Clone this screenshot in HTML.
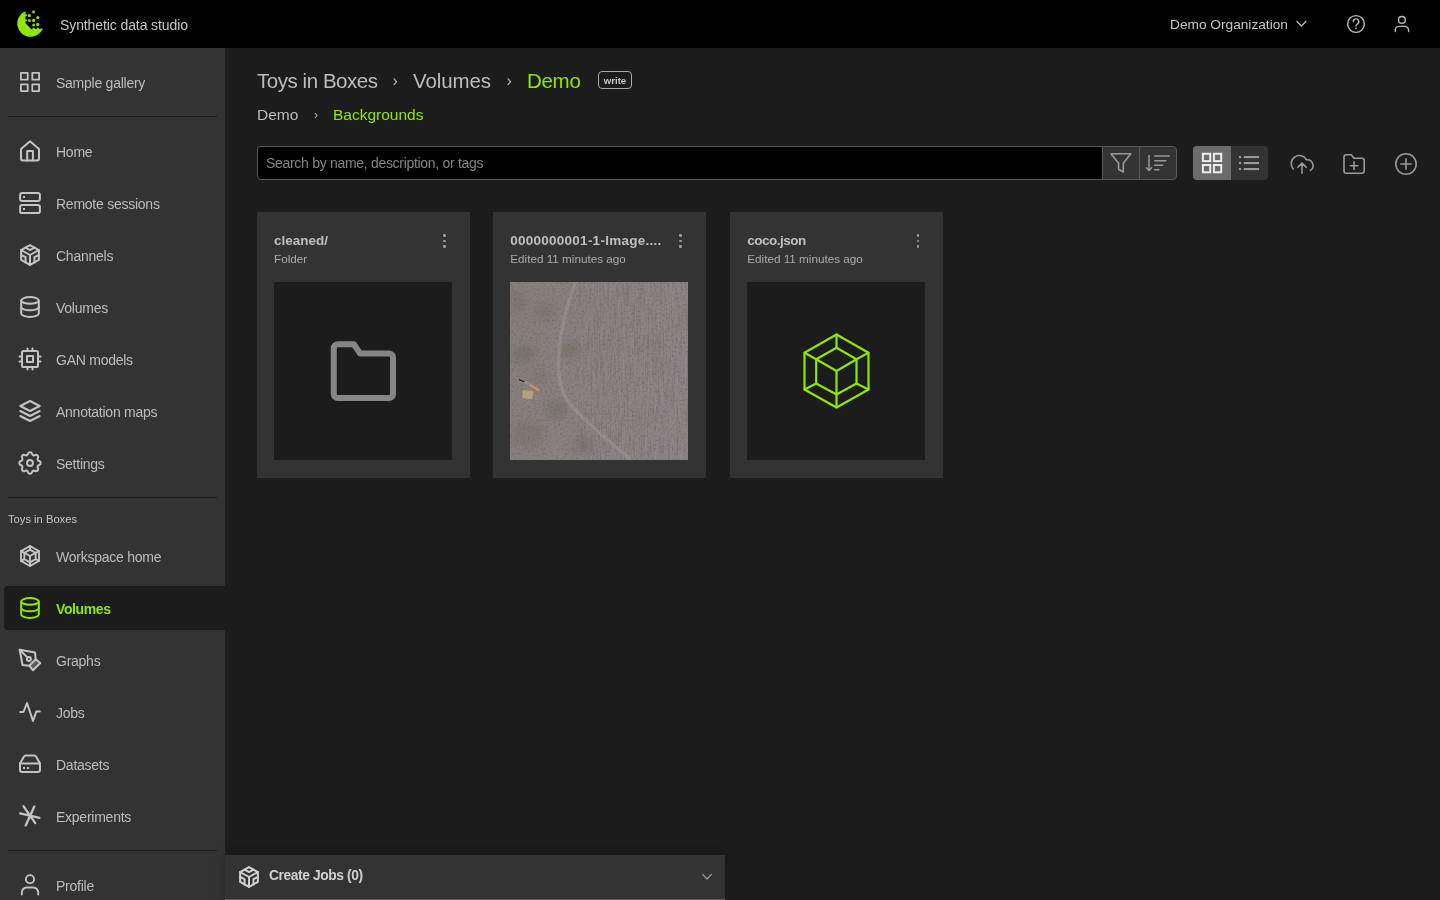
<!DOCTYPE html>
<html>
<head>
<meta charset="utf-8">
<style>
*{box-sizing:border-box;margin:0;padding:0}
html,body{width:1440px;height:900px;overflow:hidden;background:#1c1c1c;font-family:"Liberation Sans",sans-serif;color:#c8c8c8}
.abs{position:absolute;white-space:nowrap}
#main{position:absolute;left:0;top:0;width:1440px;height:900px;will-change:transform}
#hdr{will-change:transform;position:absolute;left:0;top:0;width:1440px;height:48px;background:#000}
#side{will-change:transform;position:absolute;left:0;top:48px;width:225px;height:852px;background:#333}
.item{position:absolute;left:4px;width:221px;height:44px}
.item svg{position:absolute;left:14px;top:10px;width:24px;height:24px;overflow:visible}
.item span{position:absolute;left:52px;top:1px;line-height:44px;font-size:14px;color:#bdbdbd;letter-spacing:-0.25px}
.item.active{background:#1c1c1c;border-radius:4px 0 0 4px}
.item.active span{color:#91e600;font-weight:700;letter-spacing:-0.4px}
.div{position:absolute;left:8px;width:209px;height:1px;background:#1c1c1c}
.ico{fill:none;stroke:#c4c4c4;stroke-width:2;stroke-linecap:round;stroke-linejoin:round}
.card{position:absolute;top:212px;width:213px;height:266px;background:#333}
.card .t{position:absolute;left:17px;top:19.5px;line-height:18px;font-size:13.5px;font-weight:700;color:#bfbfbf}
.card .s{position:absolute;left:17px;top:39px;line-height:16px;font-size:11.7px;color:#ababab}
.card .img{position:absolute;left:17px;top:70px;width:178px;height:178px;background:#1c1c1c;overflow:hidden}
.kebab{position:absolute;top:22px;width:4px;height:16px}
.kebab i{position:absolute;left:0.2px;width:2.6px;height:2.6px;border-radius:50%;background:#9c9c9c}
</style>
</head>
<body>
<div id="hdr">
  <svg class="abs" style="left:14px;top:8px" width="32" height="32" viewBox="14 8 32 32">
    <defs><clipPath id="lc"><path d="M14 8 H25.4 V23 L31.4 29.3 H46 V8 Z M14 8 V40 H46 V8" clip-rule="evenodd"/></clipPath></defs>
    <path fill="#91e600" d="M25.6 11.2 L25.4 23 L31.4 29.2 L42.9 28.6 A13.3 13.3 0 1 1 25.6 11.2 Z"/>
    <g fill="#91e600">
      <circle cx="33.6" cy="11.9" r="1.55" fill="#84d000"/><circle cx="29.4" cy="15.5" r="1.55"/><circle cx="37.8" cy="17.5" r="1.55"/>
      <circle cx="29.4" cy="20.4" r="1.5" fill="#80cc00"/><circle cx="33.6" cy="20.4" r="1.55"/><circle cx="33.6" cy="25" r="1.5" fill="#80cc00"/><circle cx="37.8" cy="24.4" r="1.55"/><circle cx="25.9" cy="15.3" r="1.1"/><circle cx="25.9" cy="20.3" r="1.1"/><circle cx="33.6" cy="28.7" r="1.1"/><circle cx="37.8" cy="28.6" r="1.1"/>
    </g>
  </svg>
  <div class="abs" style="left:60px;top:15px;line-height:20px;font-size:14px;letter-spacing:-0.1px;color:#c6c6c6">Synthetic data studio</div>
  <div class="abs" style="left:1170px;top:15px;line-height:20px;font-size:13.7px;color:#c6c6c6">Demo Organization</div>
  <svg class="abs" style="left:1290px;top:16px" width="20" height="16" viewBox="1290 16 20 16"><path d="M1297 21.5 L1301.4 26 L1305.8 21.5" fill="none" stroke="#bbb" stroke-width="1.3" stroke-linecap="round" stroke-linejoin="round"/></svg>
  <svg class="abs" style="left:1340px;top:8px" width="32" height="32" viewBox="1340 8 32 32">
    <circle cx="1356" cy="24" r="8.4" fill="none" stroke="#b8b8b8" stroke-width="1.4"/>
    <path d="M1353.4 21.6 A2.7 2.7 0 1 1 1357.3 24 Q1356 24.8 1356 26.1" fill="none" stroke="#b8b8b8" stroke-width="1.4" stroke-linecap="round"/>
    <circle cx="1356" cy="28.3" r="0.9" fill="#b8b8b8"/>
  </svg>
  <svg class="abs" style="left:1386px;top:8px" width="32" height="32" viewBox="1386 8 32 32">
    <circle cx="1401.9" cy="19.9" r="3.4" fill="none" stroke="#b8b8b8" stroke-width="1.4"/>
    <path d="M1395.3 31.5 V30 A3.6 3.6 0 0 1 1398.9 26.4 H1405 A3.6 3.6 0 0 1 1408.6 30 V31.5" fill="none" stroke="#b8b8b8" stroke-width="1.4" stroke-linecap="round"/>
  </svg>
</div>

<div id="side">
<div class="item" style="top:12px"><svg viewBox="0 0 24 24"><g class="ico" style="stroke-width:1.8"><rect x="2.9" y="2.9" width="6.8" height="6.8"/><rect x="14.3" y="2.9" width="6.8" height="6.8"/><rect x="2.9" y="14.3" width="6.8" height="6.8"/><rect x="14.3" y="14.3" width="6.8" height="6.8"/></g></svg><span>Sample gallery</span></div>
<div class="div" style="top:68px"></div>
<div class="item" style="top:81px"><svg viewBox="0 0 24 24"><g class="ico"><path d="M3 10 L12 2.2 L21 10 V19.5 A2 2 0 0 1 19 21.5 H5 A2 2 0 0 1 3 19.5 Z"/><path d="M9.2 21.5 V12 H14.9 V21.5"/></g></svg><span>Home</span></div>
<div class="item" style="top:133px"><svg viewBox="0 0 24 24"><g class="ico"><rect x="2.1" y="1.9" width="19.8" height="8.1" rx="2.2"/><rect x="2.1" y="13.9" width="19.8" height="8.2" rx="2.2"/></g><rect x="5" y="5" width="2" height="2" fill="#c4c4c4"/><rect x="5" y="17" width="2" height="2" fill="#c4c4c4"/></svg><span>Remote sessions</span></div>
<div class="item" style="top:185px"><svg viewBox="0 0 24 24"><g class="ico" transform="translate(12 12) scale(1.11) translate(-12 -12)" style="stroke-width:1.8"><path d="M20 7.5v9l-4 2.25l-4 2.25l-4 -2.25l-4 -2.25v-9l4 -2.25l4 -2.25l4 2.25z"/><path d="M12 12l4 -2.25l4 -2.25"/><path d="M12 12l0 9"/><path d="M12 12l-4 -2.25l-4 -2.25"/><path d="M20 12l-4 2v4.75"/><path d="M4 12l4 2l0 4.75"/><path d="M8 5.25l4 2.25l4 -2.25"/></g></svg><span>Channels</span></div>
<div class="item" style="top:237px"><svg viewBox="0 0 24 24"><g class="ico" transform="translate(12 12) scale(1.1) translate(-12 -12)" style="stroke-width:1.8"><ellipse cx="12" cy="6" rx="8" ry="3"/><path d="M4 6v6a8 3 0 0 0 16 0v-6"/><path d="M4 12v6a8 3 0 0 0 16 0v-6"/></g></svg><span>Volumes</span></div>
<div class="item" style="top:289px"><svg viewBox="0 0 24 24"><g class="ico"><path d="M4 5.6 A1.6 1.6 0 0 1 5.6 4 H18.4 A1.6 1.6 0 0 1 20 5.6 V18.4 A1.6 1.6 0 0 1 18.4 20 H5.6 A1.6 1.6 0 0 1 4 18.4 Z"/><path d="M9 9h6v6h-6z"/><path d="M1.5 9.5h2.5 M1.5 14.5h2.5 M20 9.5h2.5 M20 14.5h2.5 M9.5 1.5v2.5 M14.5 1.5v2.5 M9.5 20v2.5 M14.5 20v2.5"/></g></svg><span>GAN models</span></div>
<div class="item" style="top:341px"><svg viewBox="0 0 24 24"><g class="ico"><path d="M12 2 L21.7 7 L12 12 L2.3 7 Z"/><path d="M2.3 12 L12 17 L21.7 12"/><path d="M2.3 17 L12 22 L21.7 17"/></g></svg><span>Annotation maps</span></div>
<div class="item" style="top:393px"><svg viewBox="0 0 24 24"><g class="ico" transform="translate(12 12) scale(1.19) translate(-12 -12)" style="stroke-width:1.7"><path d="M10.325 4.317c.426 -1.756 2.924 -1.756 3.35 0a1.724 1.724 0 0 0 2.573 1.066c1.543 -.94 3.31 .826 2.37 2.37a1.724 1.724 0 0 0 1.065 2.572c1.756 .426 1.756 2.924 0 3.35a1.724 1.724 0 0 0 -1.066 2.573c.94 1.543 -.826 3.31 -2.37 2.37a1.724 1.724 0 0 0 -2.572 1.065c-.426 1.756 -2.924 1.756 -3.35 0a1.724 1.724 0 0 0 -2.573 -1.066c-1.543 .94 -3.31 -.826 -2.37 -2.37a1.724 1.724 0 0 0 -1.065 -2.572c-1.756 -.426 -1.756 -2.924 0 -3.35a1.724 1.724 0 0 0 1.066 -2.573c-.94 -1.543 .826 -3.31 2.37 -2.37c1 .608 2.296 .07 2.572 -1.065z"/></g><circle class="ico" cx="12" cy="12" r="2.9"/></svg><span>Settings</span></div>
<div class="div" style="top:449px"></div>
<div class="abs" style="left:8px;top:463px;line-height:16px;font-size:11.2px;color:#c4c4c4">Toys in Boxes</div>
<div class="item" style="top:486px"><svg viewBox="0 0 24 24"><g class="ico" style="stroke-width:1.9"><path d="M12 2 L21 7.1 V16.9 L12 22 L3 16.9 V7.1 Z"/><path d="M12 5.7 L17.65 8.9 V15.1 L12 18.3 L6.35 15.1 V8.9 Z"/><path d="M12 12 L6.35 8.9 M12 12 L17.65 8.9 M12 12 V18.3 M12 2 V5.7 M21 7.1 L17.65 8.9 M21 16.9 L17.65 15.1 M12 22 V18.3 M3 16.9 L6.35 15.1 M3 7.1 L6.35 8.9"/></g></svg><span>Workspace home</span></div>
<div class="item active" style="top:538px"><svg viewBox="0 0 24 24"><g class="ico" transform="translate(12 12) scale(1.1) translate(-12 -12)" style="stroke-width:1.8;stroke:#91e600"><ellipse cx="12" cy="6" rx="8" ry="3"/><path d="M4 6v6a8 3 0 0 0 16 0v-6"/><path d="M4 12v6a8 3 0 0 0 16 0v-6"/></g></svg><span>Volumes</span></div>
<div class="item" style="top:590px"><svg viewBox="0 0 24 24"><g class="ico"><path d="M1.7 1.7 L17 4.5 L17.7 11.3 L11.3 17.7 L4.5 17 Z"/><path d="M1.7 1.7 L9.4 9.4"/><circle cx="10.9" cy="10.9" r="2"/><path d="M17.7 11.3 L22.3 15 L15 22.3 L11.3 17.7" fill="rgba(196,196,196,0.3)"/></g></svg><span>Graphs</span></div>
<div class="item" style="top:642px"><svg viewBox="0 0 24 24"><g class="ico"><path d="M2.2 12 H5.5 L9 3 L15 21 L18.3 11.6 H21.8"/></g></svg><span>Jobs</span></div>
<div class="item" style="top:694px"><svg viewBox="0 0 24 24"><g class="ico"><path d="M2 11.5 H22 V18 A2 2 0 0 1 20 20 H4 A2 2 0 0 1 2 18 Z"/><path d="M2 11.5 L6 4.6 A2 2 0 0 1 7.7 3.6 H16.3 A2 2 0 0 1 18 4.6 L22 11.5"/></g><rect x="5" y="15" width="2" height="2" fill="#c4c4c4"/><rect x="9" y="15" width="2" height="2" fill="#c4c4c4"/></svg><span>Datasets</span></div>
<div class="item" style="top:746px"><svg viewBox="0 0 24 24"><g class="ico" style="stroke-width:2.3"><path d="M5.6 2.3 L17.3 19.1 M16.3 2.5 L7.7 21.4 M2.2 9.3 L21.4 13.8"/></g></svg><span>Experiments</span></div>
<div class="div" style="top:802px"></div>
<div class="item" style="top:815px"><svg viewBox="0 0 24 24"><g class="ico" style="stroke-width:1.9"><circle cx="12" cy="6.2" r="4.1"/><path d="M3.8 21.5 V19.5 A5 5 0 0 1 8.8 14.5 H15.2 A5 5 0 0 1 20.2 19.5 V21.5"/></g></svg><span>Profile</span></div>

</div>

<div id="main">
<div class="abs" style="left:257px;top:66.7px;line-height:28px;font-size:20.5px;letter-spacing:-0.45px;color:#bdbdbd">Toys in Boxes</div>
<div class="abs" style="left:392.5px;top:69px;line-height:24px;font-size:16px;color:#b8b8b8">›</div>
<div class="abs" style="left:413px;top:66.7px;line-height:28px;font-size:20.5px;letter-spacing:-0.1px;color:#bdbdbd">Volumes</div>
<div class="abs" style="left:506.5px;top:69px;line-height:24px;font-size:16px;color:#b8b8b8">›</div>
<div class="abs" style="left:527px;top:66.7px;line-height:28px;font-size:20.5px;letter-spacing:-0.3px;color:#91e600">Demo</div>
<div class="abs" style="left:598px;top:71px;width:34px;height:18px;border:1.5px solid #a8a8a8;border-radius:4px;font-size:9.6px;font-weight:700;line-height:17px;text-align:center;color:#c4c4c4">write</div>
<div class="abs" style="left:257px;top:104px;line-height:22px;font-size:15.5px;color:#bdbdbd">Demo</div>
<div class="abs" style="left:314px;top:105px;line-height:20px;font-size:12px;color:#b8b8b8">›</div>
<div class="abs" style="left:333px;top:104px;line-height:22px;font-size:15.5px;color:#91e600">Backgrounds</div>

<!-- search group -->
<div class="abs" style="left:257px;top:146px;width:920px;height:34px;border:1px solid #585858;border-radius:4px;background:#333;overflow:hidden">
  <div class="abs" style="left:0;top:0;width:844px;height:32px;background:#000"></div>
  <div class="abs" style="left:844px;top:0;width:1px;height:32px;background:#585858"></div>
  <div class="abs" style="left:881px;top:0;width:1px;height:32px;background:#585858"></div>
</div>
<div class="abs" style="left:266px;top:153.2px;line-height:20px;font-size:14px;letter-spacing:-0.3px;color:#848484">Search by name, description, or tags</div>
<svg class="abs" style="left:1104px;top:146px" width="34" height="34" viewBox="1104 146 34 34"><path d="M1111 153.8 H1130.8 L1123.3 163.2 V172 L1118.6 169.3 V163.2 Z" fill="none" stroke="#999" stroke-width="1.6" stroke-linejoin="round"/></svg>
<svg class="abs" style="left:1140px;top:146px" width="36" height="34" viewBox="1140 146 36 34"><g fill="none" stroke="#999" stroke-width="1.5" stroke-linecap="round"><path d="M1149 155.5 V170.5 M1146.3 167.8 L1149 170.5 L1151.7 167.8"/><path d="M1154.7 156 H1169.3 M1154.7 160.8 H1165.8 M1154.7 165.2 H1162.7 M1154.7 169.8 H1158.8"/></g></svg>

<!-- view toggle -->
<div class="abs" style="left:1193px;top:146px;width:75px;height:34px;border-radius:4px;background:#333;overflow:hidden">
  <div class="abs" style="left:0;top:0;width:38px;height:34px;background:#6b6b6b"></div>
</div>
<svg class="abs" style="left:1193px;top:146px" width="75" height="34" viewBox="1193 146 75 34">
  <g fill="none" stroke="#ececec" stroke-width="2"><rect x="1202.9" y="153.8" width="7.3" height="7.3"/><rect x="1213.9" y="153.8" width="7.3" height="7.3"/><rect x="1202.9" y="165" width="7.3" height="7.3"/><rect x="1213.9" y="165" width="7.3" height="7.3"/></g>
  <g fill="#9a9a9a"><rect x="1238.8" y="156" width="2.3" height="2.1"/><rect x="1238.8" y="162" width="2.3" height="2.1"/><rect x="1238.8" y="168" width="2.3" height="2.1"/><rect x="1243.8" y="156" width="15.2" height="2.1"/><rect x="1243.8" y="162" width="15.2" height="2.1"/><rect x="1243.8" y="168" width="15.2" height="2.1"/></g>
</svg>

<!-- actions -->
<svg class="abs" style="left:1284px;top:148px" width="140" height="32" viewBox="1284 148 140 32">
  <g fill="none" stroke="#999" stroke-width="1.6" stroke-linecap="round" stroke-linejoin="round">
    <path d="M1293.2 169.1 A8.2 8.2 0 1 1 1306.6 159.8 A5.8 5.8 0 0 1 1310.4 170.4"/>
    <path d="M1302 173.2 V163.2 M1297.8 167.3 L1302 163.1 L1306.2 167.3"/>
    <path d="M1344 157 A2.4 2.4 0 0 1 1346.4 154.7 H1351.3 L1353.9 158.3 H1361.8 A2.4 2.4 0 0 1 1364.2 160.7 V171 A2.4 2.4 0 0 1 1361.8 173.3 H1346.4 A2.4 2.4 0 0 1 1344 171 Z"/>
    <path d="M1354 161.9 V169.4 M1350.3 165.7 H1357.8"/>
    <circle cx="1406" cy="164" r="10.2"/>
    <path d="M1406 158.9 V169.1 M1400.9 164 H1411.1"/>
  </g>
</svg>

<!-- cards -->
<div class="card" style="left:257px">
  <div class="t">cleaned/</div>
  <div class="s">Folder</div>
  <div class="kebab" style="left:186px"><i style="top:0"></i><i style="top:5.7px"></i><i style="top:11.4px"></i></div>
  <div class="img"><svg width="178" height="178" viewBox="0 0 178 178"><path d="M59.8 66.2 A4 4 0 0 1 63.8 62.2 H79.8 L86 71.4 H115 A4 4 0 0 1 119 75.4 V112.1 A4 4 0 0 1 115 116.1 H63.8 A4 4 0 0 1 59.8 112.1 Z" fill="none" stroke="#868686" stroke-width="6" stroke-linejoin="round"/></svg></div>
</div>
<div class="card" style="left:493.3px">
  <div class="t" style="letter-spacing:0.25px">0000000001-1-Image....</div>
  <div class="s">Edited 11 minutes ago</div>
  <div class="kebab" style="left:186px"><i style="top:0"></i><i style="top:5.7px"></i><i style="top:11.4px"></i></div>
  <div class="img" style="background:#888380"><svg width="178" height="178" viewBox="0 0 178 178" style="display:block">
<defs>
<filter id="pn" x="0" y="0" width="100%" height="100%" color-interpolation-filters="sRGB"><feTurbulence type="fractalNoise" baseFrequency="0.45" numOctaves="3" seed="7"/><feColorMatrix type="matrix" values="0 0 0 0 0.4  0 0 0 0 0.38  0 0 0 0 0.36  0 0 0 -2.4 1.3"/></filter>
<filter id="vst" x="0" y="0" width="100%" height="100%" color-interpolation-filters="sRGB"><feTurbulence type="fractalNoise" baseFrequency="0.6 0.03" numOctaves="2" seed="5"/><feColorMatrix type="matrix" values="0 0 0 0 0.62  0 0 0 0 0.58  0 0 0 0 0.6  0 0 0 -3 1.6"/></filter>
<filter id="vsd" x="0" y="0" width="100%" height="100%" color-interpolation-filters="sRGB"><feTurbulence type="fractalNoise" baseFrequency="0.7 0.04" numOctaves="2" seed="9"/><feColorMatrix type="matrix" values="0 0 0 0 0.36  0 0 0 0 0.33  0 0 0 0 0.36  0 0 0 -3 1.6"/></filter>
<filter id="bl3"><feGaussianBlur stdDeviation="4.5"/></filter>
<filter id="bl1"><feGaussianBlur stdDeviation="0.7"/></filter>
<linearGradient id="pg" x1="0" y1="0" x2="1" y2="0.3"><stop offset="0" stop-color="#867f79"/><stop offset="0.45" stop-color="#8a8280"/><stop offset="1" stop-color="#8d8486"/></linearGradient>
<linearGradient id="fade" x1="0" y1="0" x2="1" y2="0"><stop offset="0.3" stop-color="#fff" stop-opacity="0"/><stop offset="0.45" stop-color="#fff" stop-opacity="1"/></linearGradient>
<mask id="rm"><rect width="178" height="178" fill="url(#fade)"/></mask>
</defs>
<rect width="178" height="178" fill="url(#pg)"/>
<g filter="url(#bl3)">
<ellipse cx="60" cy="68" rx="9" ry="7" fill="#66675e" opacity="0.55"/>
<ellipse cx="14" cy="72" rx="12" ry="9" fill="#6c6b63" opacity="0.55"/>
<ellipse cx="36" cy="30" rx="10" ry="9" fill="#716d67" opacity="0.5"/>
<ellipse cx="46" cy="128" rx="11" ry="10" fill="#6a695f" opacity="0.5"/>
<ellipse cx="18" cy="152" rx="16" ry="14" fill="#7a665e" opacity="0.4"/>
<ellipse cx="8" cy="20" rx="10" ry="12" fill="#75706b" opacity="0.45"/>
<ellipse cx="72" cy="162" rx="10" ry="10" fill="#776e68" opacity="0.5"/>
<ellipse cx="30" cy="95" rx="10" ry="8" fill="#726f68" opacity="0.4"/>
</g>
<rect width="178" height="178" filter="url(#pn)" opacity="0.55"/>
<g mask="url(#rm)">
<rect width="178" height="178" filter="url(#vst)" opacity="0.3"/>
<rect width="178" height="178" filter="url(#vsd)" opacity="0.28"/>
</g>
<path d="M65.8 0 C58 20 50 45 48.5 75 C47.5 95 52 112 60 122 C75 140 100 160 121 178" fill="none" stroke="#a59d96" stroke-width="3.4" opacity="0.4" filter="url(#bl1)"/>
<g>
<path d="M9 97.5 L16 100.5" stroke="#222" stroke-width="1.3"/>
<path d="M15.5 100.3 L28.5 108" stroke="#d98a52" stroke-width="2.5" stroke-linecap="round"/>
<path d="M16.5 101.2 L19.5 102.8" stroke="#5a86c0" stroke-width="1.9"/>
<rect x="12.5" y="108.5" width="10.5" height="8" fill="#b89f7c" transform="rotate(6 17.7 112.5)"/>
</g>
</svg>
</div>
</div>
<div class="card" style="left:730.33px">
  <div class="t" style="letter-spacing:-0.5px">coco.json</div>
  <div class="s">Edited 11 minutes ago</div>
  <div class="kebab" style="left:186px"><i style="top:0"></i><i style="top:5.7px"></i><i style="top:11.4px"></i></div>
  <div class="img"><svg width="178" height="178" viewBox="0 0 178 178"><g fill="none" stroke="#91e600" stroke-width="2.2" stroke-linejoin="round" stroke-linecap="round"><path d="M89.5 52.5 L121.5 70.8 V107.5 L89.5 125.5 L57.5 107.5 V70.8 Z"/><path d="M89.5 65.8 L109.5 77.2 V101.5 L89.5 112.5 L69.2 101.5 V77.2 Z"/><path d="M89.5 89 L69.2 77.2 M89.5 89 L109.5 77.2 M89.5 89 V112.5 M89.5 52.5 V65.8 M121.5 70.8 L109.5 77.2 M121.5 107.5 L109.5 101.5 M89.5 125.5 V112.5 M57.5 107.5 L69.2 101.5 M57.5 70.8 L69.2 77.2"/></g></svg></div>
</div>

<!-- create jobs panel -->
<div class="abs" style="left:225px;top:855px;width:500px;height:45px;background:#333;border-bottom:1px solid #5a5a5a;box-shadow:0 0 10px rgba(0,0,0,0.22)"></div>
<svg class="abs" style="left:237px;top:865px" width="24" height="24" viewBox="0 0 24 24"><g class="ico" transform="translate(12 12) scale(1.11) translate(-12 -12)" style="stroke-width:1.8;stroke:#d0d0d0"><path d="M20 7.5v9l-4 2.25l-4 2.25l-4 -2.25l-4 -2.25v-9l4 -2.25l4 -2.25l4 2.25z"/><path d="M12 12l4 -2.25l4 -2.25"/><path d="M12 12l0 9"/><path d="M12 12l-4 -2.25l-4 -2.25"/><path d="M20 12l-4 2v4.75"/><path d="M4 12l4 2l0 4.75"/><path d="M8 5.25l4 2.25l4 -2.25"/></g></svg>
<div class="abs" style="left:269px;top:866.3px;line-height:20px;font-size:13.8px;letter-spacing:-0.4px;font-weight:700;color:#d2d2d2">Create Jobs (0)</div>
<svg class="abs" style="left:698px;top:868px" width="18" height="16" viewBox="698 868 18 16"><path d="M702.6 874.4 L707 879 L711.4 874.4" fill="none" stroke="#9a9a9a" stroke-width="1.3" stroke-linecap="round" stroke-linejoin="round"/></svg>

</div>
</body>
</html>
